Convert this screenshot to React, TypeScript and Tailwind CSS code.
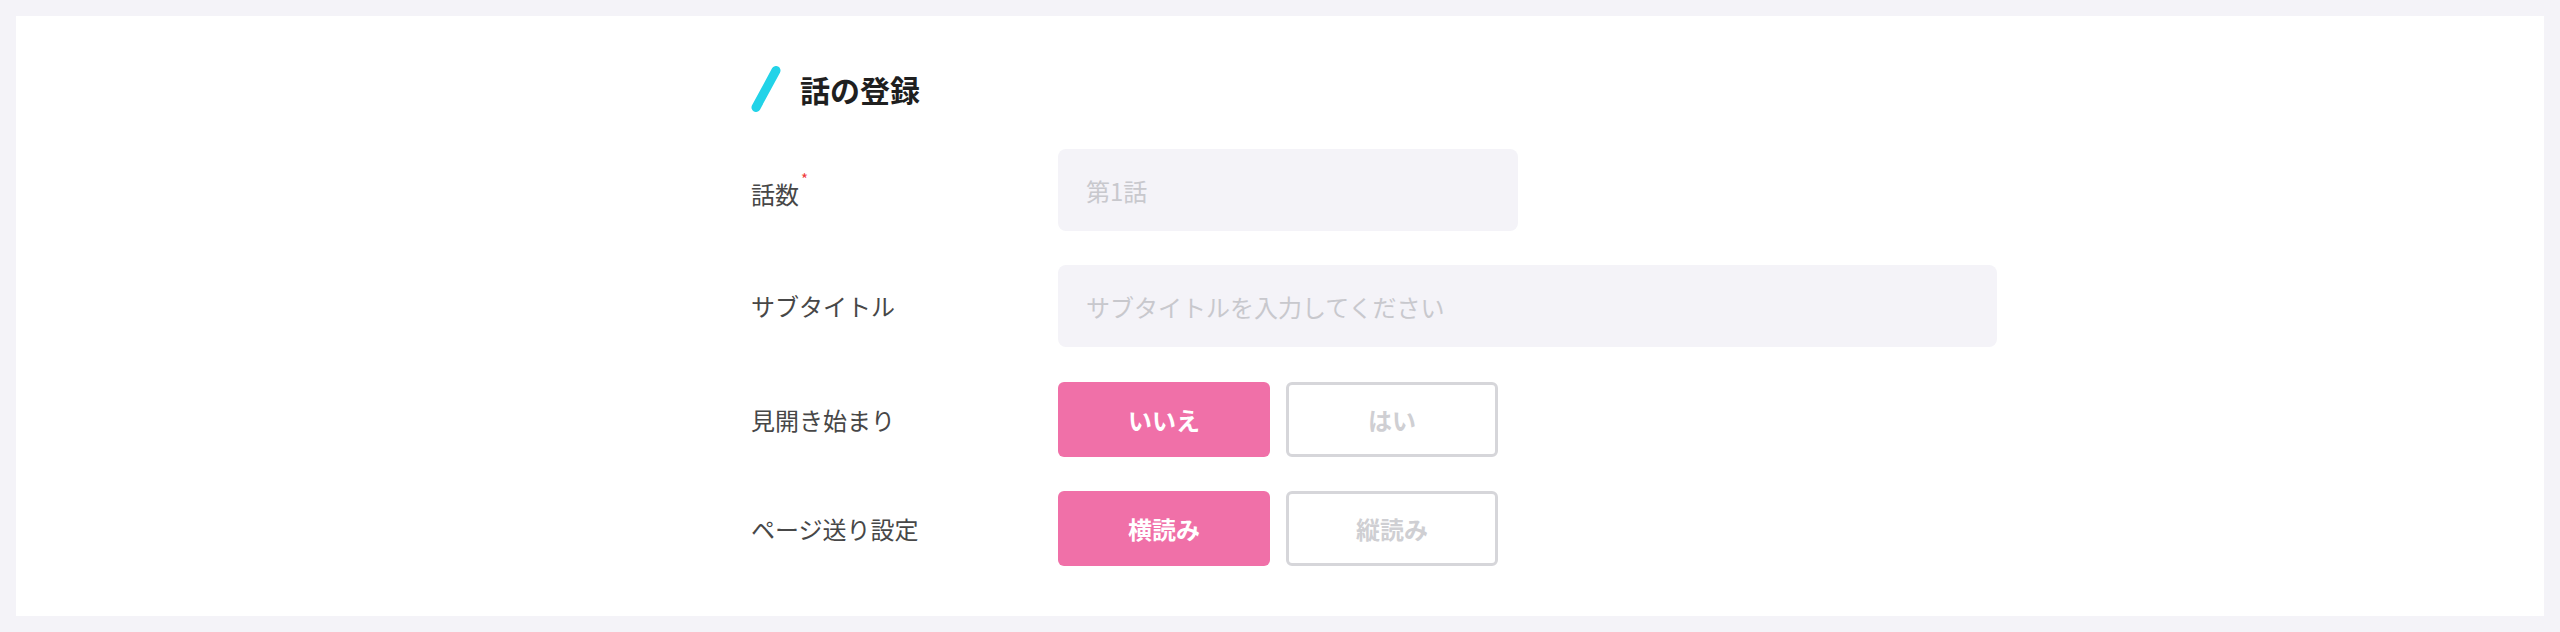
import React, { useState } from "react";

const FONT = { fontFamily: '"Noto Sans CJK JP", "Noto Sans", sans-serif' };

function Toggle({
  options,
  value,
  onChange,
}: {
  options: string[];
  value: number;
  onChange: (i: number) => void;
}) {
  return (
    <div className="flex gap-4">
      {options.map((opt, i) =>
        i === value ? (
          <button
            key={opt}
            onClick={() => onChange(i)}
            className="w-[212px] h-[75px] rounded-[6px] bg-[#f070a8] text-white text-[24px] font-bold"
          >
            {opt}
          </button>
        ) : (
          <button
            key={opt}
            onClick={() => onChange(i)}
            className="w-[212px] h-[75px] rounded-[6px] border-[3px] border-[#d6d6da] bg-white text-[#cfcfd3] text-[24px] font-bold"
          >
            {opt}
          </button>
        )
      )}
    </div>
  );
}

export default function App() {
  const [spread, setSpread] = useState(0);
  const [direction, setDirection] = useState(0);

  return (
    <div className="h-[632px] bg-[#f4f3f8] p-4" style={FONT}>
      <div className="h-[600px] bg-white pl-[735px] pt-[50px]">
        {/* Title */}
        <div className="flex items-center h-[46px]">
          <svg width="30" height="46" viewBox="0 0 30 46">
            <line x1="25" y1="4.5" x2="5" y2="41.5" stroke="#22d3e8" strokeWidth="9" strokeLinecap="round" />
          </svg>
          <h2 className="ml-[19px] text-[30px] font-bold text-[#1f1f1f] leading-none">話の登録</h2>
        </div>

        {/* Form */}
        <div className="mt-[37px] flex flex-col">
          <div className="flex items-center">
            <label className="w-[307px] text-[24px] text-[#474747] pt-2">
              <span className="relative">
                話数
                <span className="absolute -top-[5px] -right-[9px] text-[15px] leading-none text-[#ef3b3b]">*</span>
              </span>
            </label>
            <input
              readOnly
              placeholder="第1話"
              className="w-[460px] h-[82px] rounded-lg bg-[#f4f3f8] pl-[28px] text-[24px] outline-none placeholder:text-[#c8c8cd]"
            />
          </div>

          <div className="flex items-center mt-[34px]">
            <label className="w-[307px] text-[24px] text-[#474747]">サブタイトル</label>
            <input
              readOnly
              placeholder="サブタイトルを入力してください"
              className="w-[939px] h-[82px] rounded-lg bg-[#f4f3f8] pl-[28px] text-[24px] outline-none placeholder:text-[#c8c8cd]"
            />
          </div>

          <div className="flex items-center mt-[35px]">
            <label className="w-[307px] text-[24px] text-[#474747]">見開き始まり</label>
            <Toggle options={["いいえ", "はい"]} value={spread} onChange={setSpread} />
          </div>

          <div className="flex items-center mt-[34px]">
            <label className="w-[307px] text-[24px] text-[#474747]">ページ送り設定</label>
            <Toggle options={["横読み", "縦読み"]} value={direction} onChange={setDirection} />
          </div>
        </div>
      </div>
    </div>
  );
}
